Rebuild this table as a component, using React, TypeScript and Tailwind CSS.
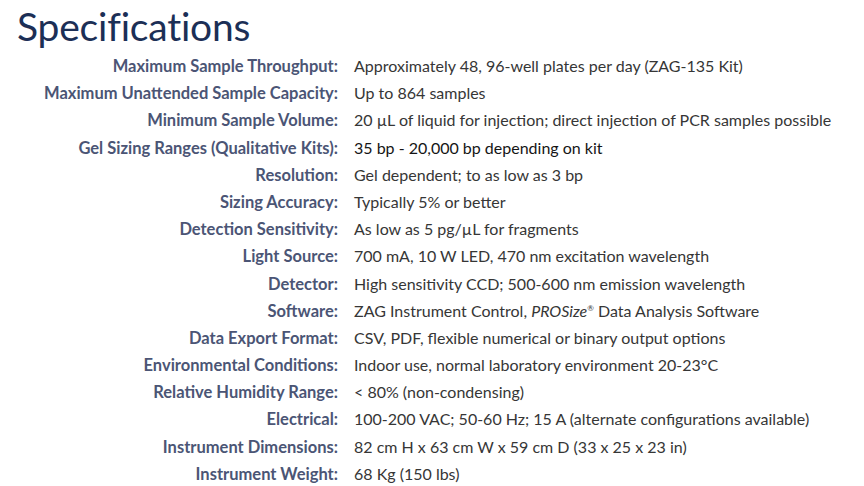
import React from 'react';

type Spec = { label: string; value: React.ReactNode; dark?: boolean };

const specs: Spec[] = [
  { label: 'Maximum Sample Throughput:', value: 'Approximately 48, 96-well plates per day (ZAG-135 Kit)' },
  { label: 'Maximum Unattended Sample Capacity:', value: 'Up to 864 samples' },
  { label: 'Minimum Sample Volume:', value: '20 µL of liquid for injection; direct injection of PCR samples possible' },
  { label: 'Gel Sizing Ranges (Qualitative Kits):', value: '35 bp - 20,000 bp depending on kit', dark: true },
  { label: 'Resolution:', value: 'Gel dependent; to as low as 3 bp' },
  { label: 'Sizing Accuracy:', value: 'Typically 5% or better' },
  { label: 'Detection Sensitivity:', value: 'As low as 5 pg/µL for fragments' },
  { label: 'Light Source:', value: '700 mA, 10 W LED, 470 nm excitation wavelength' },
  { label: 'Detector:', value: 'High sensitivity CCD; 500-600 nm emission wavelength' },
  {
    label: 'Software:',
    value: (
      <>
        ZAG Instrument Control, <span className="italic">PROSize</span>
        <sup className="text-[8px] -top-[6px] leading-none">®</sup> Data Analysis Software
      </>
    ),
  },
  { label: 'Data Export Format:', value: 'CSV, PDF, flexible numerical or binary output options' },
  { label: 'Environmental Conditions:', value: 'Indoor use, normal laboratory environment 20-23°C' },
  { label: 'Relative Humidity Range:', value: '< 80% (non-condensing)' },
  { label: 'Electrical:', value: '100-200 VAC; 50-60 Hz; 15 A (alternate configurations available)' },
  { label: 'Instrument Dimensions:', value: '82 cm H x 63 cm W x 59 cm D (33 x 25 x 23 in)' },
  { label: 'Instrument Weight:', value: '68 Kg (150 lbs)' },
];

export default function App() {
  return (
    <div className="w-[864px] h-[486px] bg-white overflow-hidden" style={{ fontFamily: 'Lato, "Open Sans", sans-serif' }}>
      <h1 className="pl-[17px] pt-[3px] text-[39px] leading-[47px] text-[#1c2f56] tracking-[-0.2px]">Specifications</h1>
      <div className="grid grid-cols-[338px_1fr] auto-rows-[27.2px] items-baseline mt-[3px]">
        {specs.map((s) => (
          <React.Fragment key={s.label}>
            <div className="text-right font-bold text-[16.5px] leading-[26px] text-[#4b5575] whitespace-nowrap">{s.label}</div>
            <div className={`pl-[16px] text-[16px] leading-[26px] whitespace-nowrap ${s.dark ? 'text-[#151515]' : 'text-[#363636]'}`}>{s.value}</div>
          </React.Fragment>
        ))}
      </div>
    </div>
  );
}
